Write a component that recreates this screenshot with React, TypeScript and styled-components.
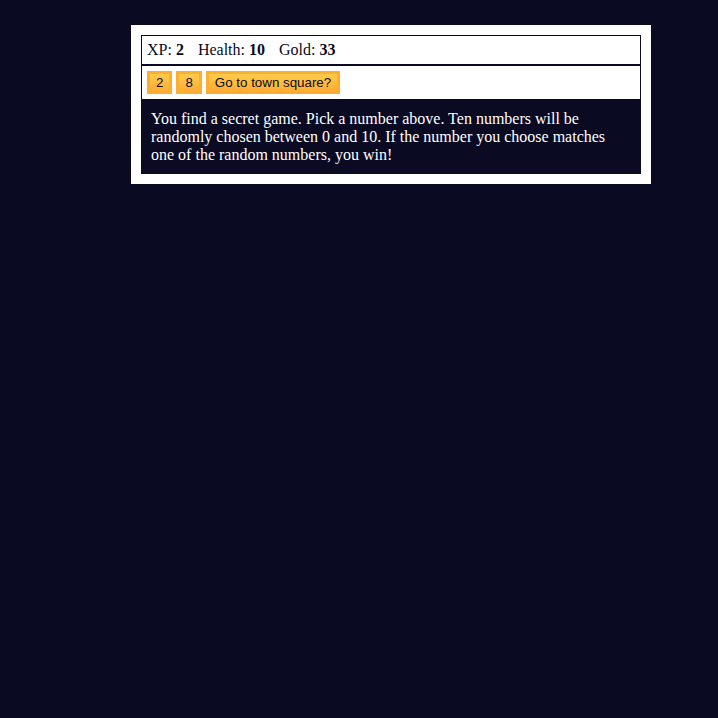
import React from 'react';
import styled, { createGlobalStyle } from 'styled-components';

const GlobalStyle = createGlobalStyle`
  html, body {
    margin: 0;
    background-color: #0a0a23;
  }
  body {
    font-family: 'Liberation Serif', 'Times New Roman', serif;
    font-size: 16px;
  }
`;

const Game = styled.div`
  width: 500px;
  background-color: #ffffff;
  color: #ffffff;
  margin: 25px 0 0 131px;
  padding: 10px;
`;

const Panel = styled.div`
  border: 1px solid #0a0a23;
  padding: 5px;
  color: #0a0a23;
`;

const Controls = styled(Panel)`
  display: flex;
  gap: 4px;
  align-items: flex-start;
`;

const Stat = styled.span`
  padding-right: 10px;
`;

const Button = styled.button`
  cursor: pointer;
  color: #0a0a23;
  background-color: #feac32;
  background-image: linear-gradient(#fecc4c, #ffac33);
  border: 3px solid #feac32;
  padding: 1px 6px;
  font-family: 'Liberation Sans', Arial, sans-serif;
  font-size: 13.333px;
  line-height: normal;
`;

const Text = styled.div`
  background-color: #0a0a23;
  color: #ffffff;
  padding: 10px;
`;

const stats = [
  { label: 'XP', value: 2 },
  { label: 'Health', value: 10 },
  { label: 'Gold', value: 33 },
];

const buttons = ['2', '8', 'Go to town square?'];

const App: React.FC = () => (
  <>
    <GlobalStyle />
    <Game>
      <Panel>
        {stats.map((s) => (
          <React.Fragment key={s.label}>
            <Stat>
              {s.label}: <strong>{s.value}</strong>
            </Stat>{' '}
          </React.Fragment>
        ))}
      </Panel>
      <Controls>
        {buttons.map((b) => (
          <Button key={b}>{b}</Button>
        ))}
      </Controls>
      <Text>
        You find a secret game. Pick a number above. Ten numbers will be randomly chosen between 0 and 10. If the
        number you choose matches one of the random numbers, you win!
      </Text>
    </Game>
  </>
);

export default App;
